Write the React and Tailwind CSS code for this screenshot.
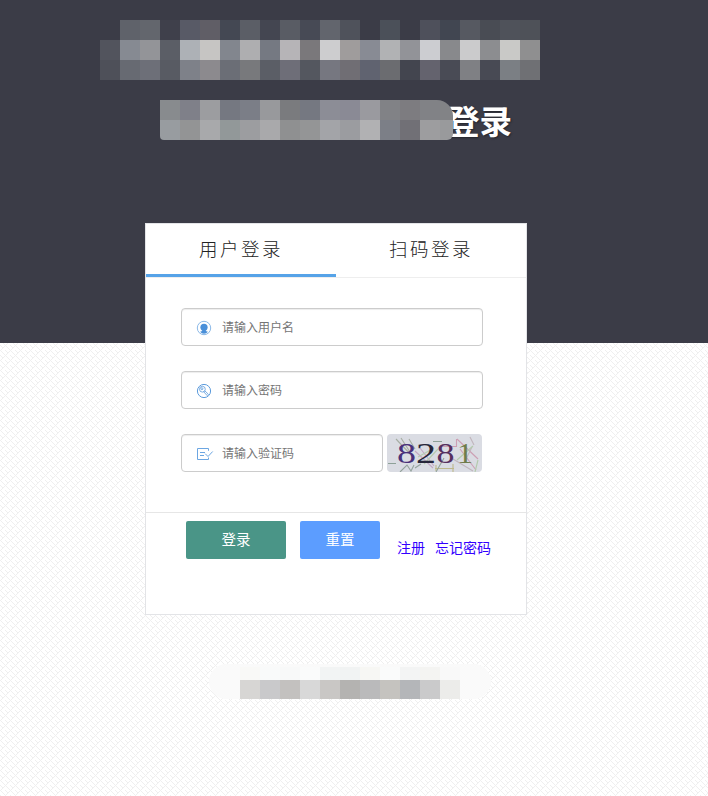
import React from "react";

const titleRows = [
  "3b3c47 5f626a 63666d 3f404b 585a66 605e66 444853 5b5e66 444651 595c64 474a55 62656d 4f525b 3b3c47 4b5059 3b3c47 4e505b 414651 565961 494c54 4f525a 4e5158",
  "52545d 868a92 939498 5b5e66 adb1b6 c6c5c3 82868e aeaeb0 757982 b6b4b7 7a787b cdcdcf 9f9c9c 888b94 b1b2b4 929398 cccdd1 88898c cbcbcc 8c8d90 c9c9c7 8f8f90",
  "4e5059 676a72 6d6f78 585b63 7e8189 8c8a8e 6b6e76 78797c 5b5e66 6e6e78 54575f 767780 706e74 606370 6b6c70 43454f 64636e 494b55 7f8084 484a54 7b7f84 6f7074",
];
const subtitleRows = [
  "888b8e 7f8089 9c9da0 757881 7b7e87 98999c 7a7b7e 757881 8c8d96 8a8a95 9a9a9f 818286 7d7c80 818286 828386",
  "989ca0 939495 a8a9ab 929899 9c9da0 a9a9ab 8f9091 949596 a3a4a8 9b9ca0 b1b1b3 7c7f87 717076 9d9d9f 999a9c",
];

function Blocks({ colors, height = "h-5" }) {
  return (
    <div className={`flex ${height}`}>
      {colors.split(" ").map((c, i) => (
        <span key={i} className="w-5 shrink-0" style={{ backgroundColor: `#${c}` }} />
      ))}
    </div>
  );
}

function Texture() {
  return (
    <svg className="absolute inset-0 h-full w-full" shapeRendering="crispEdges" aria-hidden="true">
      <defs>
        <pattern id="weave" width="10" height="10" patternUnits="userSpaceOnUse">
          <path
            fill="#efefef"
            d="M0 0h1v1h-1zM1 1h1v1h-1zM2 2h1v1h-1zM3 3h1v1h-1zM4 4h1v1h-1zM5 5h1v1h-1zM6 6h1v1h-1zM7 7h1v1h-1zM8 8h1v1h-1zM9 9h1v1h-1zM5 0h1v1h-1zM6 1h1v1h-1zM7 2h1v1h-1zM0 5h1v1h-1zM1 6h1v1h-1zM2 7h1v1h-1zM9 1h1v1h-1zM8 2h1v1h-1zM7 3h1v1h-1zM6 4h1v1h-1zM4 6h1v1h-1zM3 7h1v1h-1zM2 8h1v1h-1zM1 9h1v1h-1z"
          />
        </pattern>
      </defs>
      <rect width="100%" height="100%" fill="url(#weave)" />
    </svg>
  );
}

function UserIcon() {
  return (
    <svg width="16" height="16" viewBox="0 0 16 16" fill="none">
      <circle cx="8" cy="8" r="6.7" stroke="#8bb9e8" />
      <circle cx="8" cy="7.3" r="3.6" fill="#4a90d9" />
      <path d="M6.3 9.5h3.4v1.4l2.2.9c-1.9 2.6-5.9 2.6-7.8 0l2.2-.9z" fill="#4a90d9" />
    </svg>
  );
}

function KeyIcon() {
  return (
    <svg width="16" height="16" viewBox="0 0 16 16" fill="none" stroke="#5c9bdc">
      <circle cx="8" cy="8" r="6.6" />
      <circle cx="6.4" cy="6.2" r="2.9" strokeWidth=".8" />
      <circle cx="5.9" cy="5.7" r="1" strokeWidth=".8" />
      <path d="m8.6 7.6 3.8 3.7-1.2 1.3-3.8-4.2" strokeWidth=".8" />
    </svg>
  );
}

function CodeIcon() {
  return (
    <svg width="18" height="16" viewBox="0 0 18 16" fill="none" stroke="#6ca6e2">
      <path d="M12.5 4.8V2.5h-11v11h11v-2M4 6.5h5M4 9.5h4" />
      <path d="m9.2 7.7 2.8 2.8 4.7-5" />
    </svg>
  );
}

function Field({ icon, placeholder, width }) {
  return (
    <label
      className={`flex h-[38px] ${width} items-center rounded-[4px] border border-[#ccc] bg-white pl-[14px] shadow-[inset_0_1px_1px_rgba(0,0,0,0.075)]`}
    >
      <span className="w-[26px] shrink-0 pt-[2px]">{icon}</span>
      <input
        placeholder={placeholder}
        className="w-full min-w-0 bg-transparent text-[12px] outline-none placeholder:text-[#757575]"
      />
    </label>
  );
}

function Captcha() {
  return (
    <svg width="95" height="38" viewBox="0 0 95 38" className="overflow-hidden rounded-[4px] bg-[#dadce3]">
      <g fill="none" strokeWidth="1.1" opacity=".65">
        <path d="m9 5 17 18M14 4l9 14M22 5l6 10" stroke="#8b9482" />
        <path d="M28 17 46 34M33 14l14 18" stroke="#b58cb4" />
        <path d="m31 23 16-9M37 30l14-15" stroke="#a3c294" />
        <path d="M46 7.5h9M1 29.5h8" stroke="#668170" />
        <path d="M53 12.5h16M69.5 13V5M70 5l21 20M73 15l16 21" stroke="#c77f9c" />
        <path d="M48 34.5h19M49 31v6M66 30v8" stroke="#b0a55d" />
        <path d="m66 25 20 12M77 29l8-16M83 3l4 8" stroke="#b3a0a9" />
        <path d="M91 26l-3 12M86 12l-16 14" stroke="#9fc08f" />
        <path d="m13 38 7-7 4 6 3-6M28 34l6-4M57 24l-8 14" stroke="#708579" />
      </g>
      <g fontFamily="'Liberation Serif', serif" fontSize="29">
        <text x="10" y="29" textLength="19" lengthAdjust="spacingAndGlyphs" fill="#49317a">8</text>
        <text x="29" y="29" textLength="20" lengthAdjust="spacingAndGlyphs" fill="#27263a">2</text>
        <text x="49.5" y="29" textLength="18" lengthAdjust="spacingAndGlyphs" fill="#56305f">8</text>
        <text x="70" y="29" textLength="16" lengthAdjust="spacingAndGlyphs" fill="#6f7c4a">1</text>
      </g>
    </svg>
  );
}

export default function App() {
  return (
    <div className="relative isolate flex h-[796px] w-[708px] flex-col overflow-hidden bg-white font-['Noto_Sans_CJK_SC',sans-serif]">
      <div className="absolute inset-0 -z-10">
        <Texture />
        <div className="relative h-[343px] bg-[#3b3c47]" />
      </div>

      <header className="h-[223px] shrink-0 pt-5">
        <div className="ml-[100px]">
          {titleRows.map((row) => (
            <Blocks key={row} colors={row} />
          ))}
        </div>
        <div className="ml-[160px] mt-5 flex">
          <div className="relative z-10 h-10 w-[293px] overflow-hidden rounded-bl-[4px] rounded-br-[6px] rounded-tr-[16px]">
            {subtitleRows.map((row) => (
              <Blocks key={row} colors={row} />
            ))}
          </div>
          <h1 className="-ml-[6px] text-[32.5px] font-bold leading-[40px] text-white [text-shadow:1px_1px_2px_rgba(0,0,0,0.4)]">
            登录
          </h1>
        </div>
      </header>

      <main className="ml-[145px] h-[392px] w-[382px] shrink-0 border border-[#e3e4e7] bg-white">
        <nav className="flex h-[54px] border-b border-[#eee] text-[18.5px] font-light leading-[46px] tracking-[2.5px] text-[#222]">
          <button className="-mb-px h-[53px] flex-1 border-b-3 border-[#56a3e8] pb-[3px]">用户登录</button>
          <button className="h-[53px] flex-1 pb-[6px]">扫码登录</button>
        </nav>
        <form className="flex h-[235px] flex-col gap-[25px] border-b border-[#e6e6e6] pl-[35px] pt-[30px]">
          <Field icon={<UserIcon />} placeholder="请输入用户名" width="w-[302px]" />
          <Field icon={<KeyIcon />} placeholder="请输入密码" width="w-[302px]" />
          <div className="flex gap-1">
            <Field icon={<CodeIcon />} placeholder="请输入验证码" width="w-[202px]" />
            <Captcha />
          </div>
        </form>
        <div className="flex pl-10 pt-2 text-[14px]">
          <button className="h-[38px] w-[100px] rounded-[2px] bg-[#4a9587] pb-[2px] text-[14.5px] text-white">登录</button>
          <button className="ml-[14px] h-[38px] w-20 rounded-[2px] bg-[#5c9dff] pb-[2px] text-[14.5px] text-white">重置</button>
          <div className="ml-[17px] flex gap-[10px] pt-4 leading-[20px] text-[#3300ff]">
            <a href="#register">注册</a>
            <a href="#forgot">忘记密码</a>
          </div>
        </div>
      </main>

      <footer className="ml-[209px] mt-[49px] h-[35px] w-[282px] rounded-[18px] bg-[#fafafa] pl-[31px] pt-[3px]">
        <Blocks
          height="h-[13px]"
          colors="f9f9f7 f9fafa f8f9f9 fafbfb f2f4f4 f1f3f3 f7f7f4 fafbfb f3f4f4 f4f4f2 f9f9f9"
        />
        <Blocks
          height="h-[19px]"
          colors="d7d6d4 c9c9cb c3c1bf d8d8d8 c9c7c5 b4b3b1 bababb c5c3bf b4b6b9 cacacb ececea"
        />
      </footer>
    </div>
  );
}
